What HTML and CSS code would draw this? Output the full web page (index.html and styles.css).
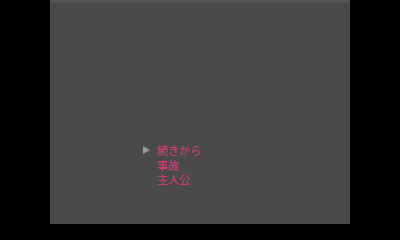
FILE: index.html
```html
<!DOCTYPE html>
<html>
<head>
<meta charset="utf-8">
<link rel="stylesheet" href="styles.css">
</head>
<body>
<div class="screen">
  <div class="topband"></div>
  <div class="menu">
    <div class="item"><span class="cursor"></span><span class="label">続きから</span></div>
    <div class="item"><span class="cursor off"></span><span class="label">事故</span></div>
    <div class="item"><span class="cursor off"></span><span class="label">主人公</span></div>
  </div>
</div>
</body>
</html>
```
FILE: styles.css
```css
html, body {
  margin: 0;
  padding: 0;
  background: #000;
  width: 400px;
  height: 225px;
  overflow: hidden;
}
.screen {
  width: 300px;
  height: 224px;
  margin-left: 50px;
  background: #4a4a4a;
  display: flex;
  flex-direction: column;
}
.topband {
  height: 3px;
  background: #535353;
}
.menu {
  margin-top: 140px;
  margin-left: 93px;
  display: flex;
  flex-direction: column;
}
.item {
  display: flex;
  align-items: center;
  height: 14.5px;
}
.cursor {
  width: 0;
  height: 0;
  border-top: 4px solid transparent;
  border-bottom: 4px solid transparent;
  border-left: 7px solid #9a9a9a;
  margin-right: 7px;
}
.cursor.off {
  border-left-color: transparent;
}
.label {
  font-family: "Noto Sans CJK JP", sans-serif;
  font-size: 11px;
  line-height: 14px;
  color: #dc3c78;
}
```
